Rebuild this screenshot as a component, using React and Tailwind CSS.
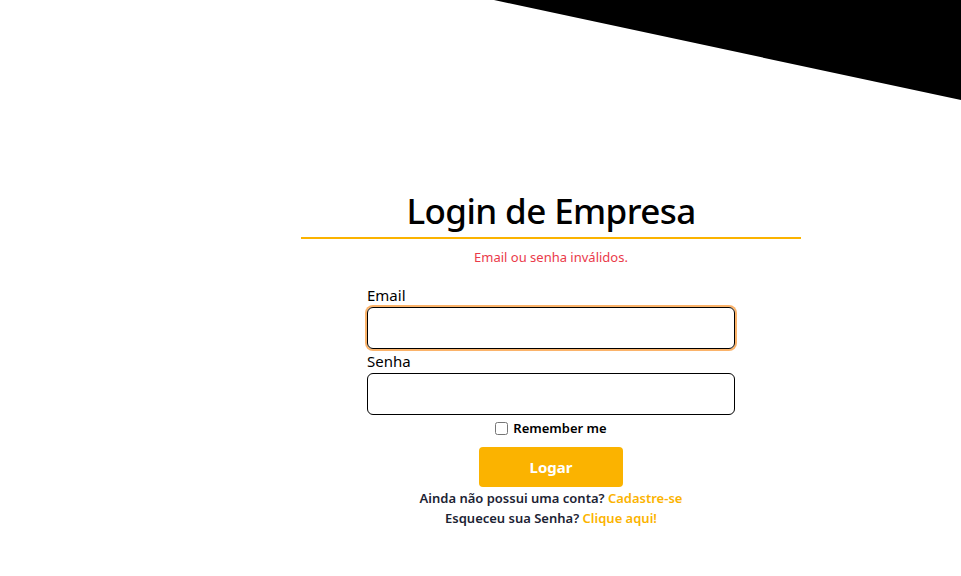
import React from "react";

const App = () => {
  return (
    <div className="relative min-h-[576px] w-full overflow-hidden bg-white font-['Noto_Sans',sans-serif] text-black">
      {/* corner shape */}
      <svg className="absolute top-0 right-0" width="467" height="100" viewBox="0 0 467 100">
        <polygon points="0,0 467,0 467,100" fill="#000" />
      </svg>

      <div className="flex pl-[141px] pt-[188px]">
        <div className="mx-auto flex w-[500px] flex-col items-center">
          <h1 className="text-[35px] leading-[46px] font-medium tracking-[-0.6px]">Login de Empresa</h1>
          <div className="mt-[3px] h-[2px] w-full bg-[#fbb300]" />
          <p className="mt-[9px] text-[13px] leading-[18px] text-[#ea3a4a]">Email ou senha inválidos.</p>

          <form className="mt-[20px] flex w-[368px] flex-col">
            <label className="text-[15px] leading-[18px]">Email</label>
            <input
              type="email"
              className="mt-[3px] h-[42px] rounded-[6px] border border-black px-2 ring-2 ring-[#fbb36a] outline-none"
            />
            <label className="mt-[2px] text-[15px] leading-[20px]">Senha</label>
            <input
              type="password"
              className="mt-[2px] h-[42px] rounded-[6px] border border-black px-2 outline-none"
            />
            <div className="mt-[4px] flex items-center justify-center gap-[5px]">
              <input type="checkbox" className="h-[13px] w-[13px]" />
              <span className="text-[13px] leading-[18px] font-semibold">Remember me</span>
            </div>
            <button
              type="button"
              className="mx-auto mt-[10px] h-[40px] w-[144px] rounded-[4px] bg-[#fbb300] text-[15px] font-bold text-white"
            >
              Logar
            </button>
          </form>

          <div className="mt-[1px] flex flex-col items-center text-[13px] leading-[20px] font-semibold text-[#1c2333]">
            <p>
              Ainda não possui uma conta? <a className="text-[#fbb300]">Cadastre-se</a>
            </p>
            <p>
              Esqueceu sua Senha? <a className="text-[#fbb300]">Clique aqui!</a>
            </p>
          </div>
        </div>
      </div>
    </div>
  );
};

export default App;
